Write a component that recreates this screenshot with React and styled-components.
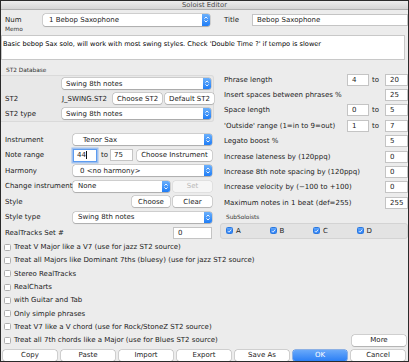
import styled, { createGlobalStyle } from "styled-components";

const GlobalStyle = createGlobalStyle`
  html, body {
    margin: 0;
    padding: 0;
    background: #ececec;
  }
  body {
    font-family: "DejaVu Sans", Verdana, sans-serif;
  }
`;

const Window = styled.div`
  width: 409px;
  height: 362px;
  box-sizing: border-box;
  border: 1px solid #2a2a2a;
  background: #ececec;
  color: #1b1b1b;
  font-size: 7px;
  display: flex;
  flex-direction: column;
  overflow: hidden;
  & > * {
    flex: none;
  }
`;

const TitleBar = styled.div`
  height: 8px;
  background: linear-gradient(#ececec, #d4d4d4);
  border-bottom: 1px solid #b0b0b0;
  display: flex;
  align-items: center;
  justify-content: center;
  font-size: 6.8px;
  line-height: 8px;
  color: #4a4a4a;
`;

const TopRow = styled.div`
  margin-top: 3px;
  height: 13px;
  padding-left: 4px;
  display: grid;
  grid-template-columns: 38px 167px 14px 28px minmax(0, 1fr);
  align-items: center;
`;

const Label = styled.span`
  font-size: 7px;
  white-space: nowrap;
  color: ${(p) => (p.$muted ? "#b5b5b5" : "#1b1b1b")};
`;

const SmallLabel = styled.div`
  font-size: 5.8px;
  color: #333;
  height: ${(p) => p.$h || 6}px;
  line-height: ${(p) => p.$lh || 6}px;
  padding-left: ${(p) => p.$pl || 4}px;
`;

const SelectBox = styled.div`
  display: flex;
  align-items: center;
  height: ${(p) => p.$h || 11}px;
  box-sizing: border-box;
  background: #fff;
  border-radius: 2.5px;
  box-shadow: 0 0 0 0.5px rgba(0, 0, 0, 0.22), 0 0.5px 1px rgba(0, 0, 0, 0.18);
  padding-left: ${(p) => p.$pad || 6}px;
  overflow: hidden;
  white-space: nowrap;
`;

const Stepper = styled.span`
  margin-left: auto;
  width: 8px;
  height: 100%;
  flex: none;
  background: linear-gradient(#6cb0fb, #1f7df6);
  display: flex;
  align-items: center;
  justify-content: center;
`;

const TextBox = styled.div`
  height: ${(p) => p.$h || 12}px;
  box-sizing: border-box;
  background: #fff;
  border: 1px solid ${(p) => (p.$focus ? "#5d9cf0" : "#c4c4c4")};
  box-shadow: ${(p) => (p.$focus ? "0 0 0 1.5px rgba(96, 156, 240, 0.55)" : "none")};
  padding-left: ${(p) => p.$pad || 3}px;
  display: flex;
  align-items: center;
  white-space: nowrap;
  overflow: hidden;
`;

const Caret = styled.span`
  width: 0.5px;
  height: 8px;
  background: #111;
  margin-left: 0.5px;
`;

const Button = styled.div`
  height: 11px;
  box-sizing: border-box;
  border-radius: 2.5px;
  background: ${(p) =>
    p.$primary ? "linear-gradient(#69a9fa, #2b7ff5)" : p.$disabled ? "#f6f6f6" : "#fff"};
  color: ${(p) => (p.$primary ? "#fff" : p.$disabled ? "#b8b8b8" : "#1b1b1b")};
  box-shadow: ${(p) =>
    p.$primary
      ? "0 0 0 0.5px #2d74db"
      : p.$disabled
      ? "0 0 0 0.5px rgba(0,0,0,0.1)"
      : "0 0 0 0.5px rgba(0,0,0,0.22), 0 0.5px 1px rgba(0,0,0,0.15)"};
  display: flex;
  align-items: center;
  justify-content: center;
  font-size: 7px;
  white-space: nowrap;
  width: ${(p) => (p.$w ? `${p.$w}px` : "auto")};
  flex: none;
`;

const Memo = styled.div`
  margin-top: 3px;
  height: 25px;
  margin-right: 3px;
  box-sizing: border-box;
  background: #fff;
  border: 1px solid #c8c8c8;
  padding: 4px 1px 0;
  font-size: 6.6px;
  color: #000;
  white-space: nowrap;
  overflow: hidden;
`;

const Columns = styled.div`
  margin-top: 5px;
  display: grid;
  grid-template-columns: 213px minmax(0, 1fr);
  column-gap: 6px;
  align-items: start;
`;

const LeftCol = styled.div`
  display: flex;
  flex-direction: column;
  min-width: 0;
`;

const GroupBox = styled.div`
  height: 47px;
  box-sizing: border-box;
  border: 1px solid #dadada;
  border-left: none;
  border-radius: 0 3px 3px 0;
  background: #e8e8e8;
  display: grid;
  grid-auto-rows: 15px;
`;

const GroupRow = styled.div`
  display: grid;
  grid-template-columns: 57px minmax(0, 1fr);
  align-items: center;
  padding: 0 2px 0 4px;
`;

const Inline = styled.div`
  display: flex;
  align-items: center;
  gap: ${(p) => p.$gap ?? 3}px;
  justify-content: ${(p) => p.$justify || "flex-start"};
`;

const Fill = styled.span`
  flex: 1;
  min-width: 0;
`;

const FieldRows = styled.div`
  margin-top: 10px;
  display: grid;
  grid-auto-rows: 15.5px;
`;

const FieldRow = styled.div`
  display: grid;
  grid-template-columns: 68px minmax(0, 1fr);
  align-items: center;
  padding: 0 2px 0 4px;
`;

const To = styled.span`
  font-size: 7px;
  padding-left: ${(p) => p.$pl || 3}px;
  width: ${(p) => p.$w}px;
  box-sizing: border-box;
  flex: none;
`;

const RightCol = styled.div`
  padding-top: 7px;
  display: flex;
  flex-direction: column;
  min-width: 0;
`;

const RightRows = styled.div`
  display: grid;
  grid-auto-rows: 15.4px;
`;

const RightRow = styled.div`
  display: grid;
  grid-template-columns: minmax(0, 1fr) 22px 16px 23px;
  align-items: center;
  padding-left: 4px;
`;

const SubGroup = styled.div`
  margin-top: 2px;
  height: 16px;
  box-sizing: border-box;
  border: 1px solid #d3d3d3;
  border-radius: 3px;
  background: #e3e3e3;
  display: grid;
  grid-template-columns: repeat(4, 43.5px);
  padding-left: 5px;
  align-items: center;
`;

const CheckList = styled.div`
  display: grid;
  grid-auto-rows: 13.3px;
`;

const CheckRow = styled.div`
  display: flex;
  align-items: center;
  gap: 3px;
  padding-left: ${(p) => p.$pl ?? 3}px;
  padding-right: 2px;
`;

const Box = styled.span`
  width: 7px;
  height: 7px;
  box-sizing: border-box;
  border-radius: 1.5px;
  flex: none;
  background: ${(p) => (p.$checked ? "linear-gradient(#5fa4f9, #2a7ff5)" : "#fff")};
  border: 0.5px solid ${(p) => (p.$checked ? "#2a78e0" : "#aeaeae")};
  display: flex;
  align-items: center;
  justify-content: center;
`;

const ButtonBar = styled.div`
  margin-top: 3px;
  padding: 0 2px;
  display: grid;
  grid-template-columns: repeat(7, 54px);
  column-gap: 4px;
`;

const Arrows = () => (
  <svg width="8" height="9" viewBox="0 0 8 9">
    <path d="M2.4 3.6 L4 2 L5.6 3.6 M2.4 5.4 L4 7 L5.6 5.4" fill="none" stroke="#fff" strokeWidth="0.9" />
  </svg>
);

const Select = ({ children, h, pad }) => (
  <SelectBox $h={h} $pad={pad}>
    <span>{children}</span>
    <Stepper>
      <Arrows />
    </Stepper>
  </SelectBox>
);

const Check = ({ checked, children, pl }) => (
  <CheckRow $pl={pl}>
    <Box $checked={checked}>
      {checked && (
        <svg width="6" height="6" viewBox="0 0 6 6">
          <path d="M1 3.1 L2.4 4.5 L5 1.4" fill="none" stroke="#fff" strokeWidth="1" />
        </svg>
      )}
    </Box>
    <Label>{children}</Label>
  </CheckRow>
);

const rightFields = [
  ["Phrase length", "4", "20"],
  ["Insert spaces between phrases %", null, "25"],
  ["Space length", "0", "5"],
  ["'Outside' range (1=in to 9=out)", "1", "7"],
  ["Legato boost %", null, "5"],
  ["Increase lateness by (120ppq)", null, "0"],
  ["Increase 8th note spacing by (120ppq)", null, "0"],
  ["Increase velocity by (\u2212100 to +100)", null, "0"],
  ["Maximum notes in 1 beat (def=255)", null, "255"],
];

const options = [
  "Treat V Major like a V7 (use for jazz ST2 source)",
  "Treat all Majors like Dominant 7ths (bluesy) (use for jazz ST2 source)",
  "Stereo RealTracks",
  "RealCharts",
  "with Guitar and Tab",
  "Only simple phrases",
  "Treat V7 like a V chord (use for Rock/StoneZ ST2 source)",
];

const footer = ["Copy", "Paste", "Import", "Export", "Save As", "OK", "Cancel"];

export default function App() {
  return (
    <>
      <GlobalStyle />
      <Window>
        <TitleBar>Soloist Editor</TitleBar>

        <TopRow>
          <Label>Num</Label>
          <Select h={12}>1 Bebop Saxophone</Select>
          <span />
          <Label>Title</Label>
          <TextBox $pad={4}>Bebop Saxophone</TextBox>
        </TopRow>

        <SmallLabel>Memo</SmallLabel>
        <Memo>
          Basic bebop Sax solo, will work with most swing styles. Check 'Double Time ?' if tempo is slower
        </Memo>

        <Columns>
          <LeftCol>
            <SmallLabel $h={10} $lh={11} $pl={5}>ST2 Database</SmallLabel>
            <GroupBox>
              <GroupRow>
                <span />
                <Select pad={4}>Swing 8th notes</Select>
              </GroupRow>
              <GroupRow>
                <Label>ST2</Label>
                <Inline>
                  <Label>J_SWING.ST2</Label>
                  <Fill />
                  <Button $w={49}>Choose ST2</Button>
                  <Button $w={49}>Default ST2</Button>
                </Inline>
              </GroupRow>
              <GroupRow>
                <Label>ST2 type</Label>
                <Select pad={4}>Swing 8th notes</Select>
              </GroupRow>
            </GroupBox>

            <FieldRows>
              <FieldRow>
                <Label>Instrument</Label>
                <Select pad={10}>Tenor Sax</Select>
              </FieldRow>
              <FieldRow>
                <Label>Note range</Label>
                <Inline $gap={0}>
                  <TextBox $focus $h={13} style={{ width: 24 }}>
                    44
                    <Caret />
                  </TextBox>
                  <To $w={13} $pl={4}>to</To>
                  <TextBox style={{ width: 23 }}>75</TextBox>
                  <Fill />
                  <Button $w={75}>Choose Instrument</Button>
                </Inline>
              </FieldRow>
              <FieldRow>
                <Label>Harmony</Label>
                <Select pad={7}>0 &lt;no harmony&gt;</Select>
              </FieldRow>
              <FieldRow>
                <Label>Change instrument</Label>
                <Inline>
                  <Fill>
                    <Select pad={5}>None</Select>
                  </Fill>
                  <Button $w={39} $disabled>
                    Set
                  </Button>
                </Inline>
              </FieldRow>
              <FieldRow>
                <Label>Style</Label>
                <Inline $justify="flex-end">
                  <Button $w={38}>Choose</Button>
                  <Button $w={39}>Clear</Button>
                </Inline>
              </FieldRow>
              <FieldRow>
                <Label>Style type</Label>
                <Select pad={5}>Swing 8th notes</Select>
              </FieldRow>
              <FieldRow>
                <Label>RealTracks Set #</Label>
                <Inline $justify="flex-end">
                  <TextBox $pad={4} style={{ width: 39 }}>
                    0
                  </TextBox>
                </Inline>
              </FieldRow>
            </FieldRows>
          </LeftCol>

          <RightCol>
            <RightRows>
              {rightFields.map(([label, a, b]) => (
                <RightRow key={label}>
                  <Label>{label}</Label>
                  {a !== null ? <TextBox $pad={4}>{a}</TextBox> : <span />}
                  {a !== null ? <To>to</To> : <span />}
                  <TextBox $pad={4}>{b}</TextBox>
                </RightRow>
              ))}
            </RightRows>
            <SmallLabel $h={10} $lh={12} $pl={6}>SubSoloists</SmallLabel>
            <SubGroup>
              {["A", "B", "C", "D"].map((l) => (
                <Check key={l} checked pl={0}>
                  {l}
                </Check>
              ))}
            </SubGroup>
          </RightCol>
        </Columns>

        <CheckList>
          {options.map((o) => (
            <Check key={o}>{o}</Check>
          ))}
          <CheckRow>
            <Box />
            <Label>Treat all 7th chords like a Major (use for Blues ST2 source)</Label>
            <Fill />
            <Button $w={54}>More</Button>
          </CheckRow>
        </CheckList>

        <ButtonBar>
          {footer.map((f) => (
            <Button key={f} $primary={f === "OK"}>
              {f}
            </Button>
          ))}
        </ButtonBar>
      </Window>
    </>
  );
}
